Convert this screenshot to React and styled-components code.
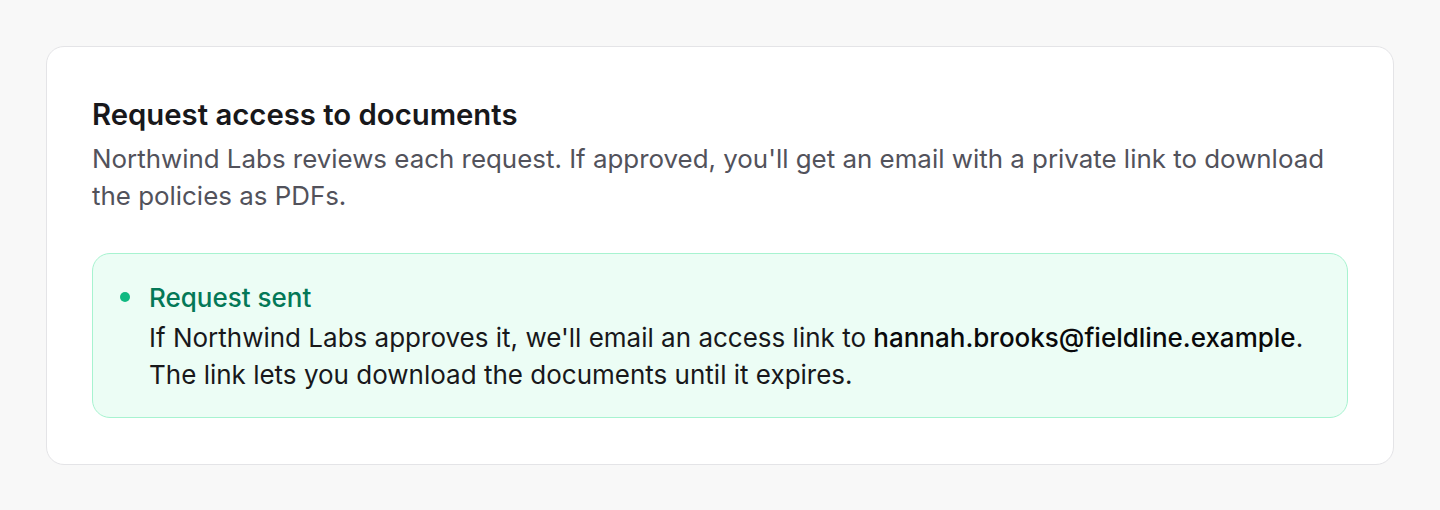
import React from "react";
import styled, { createGlobalStyle } from "styled-components";

const Global = createGlobalStyle`
  html, body { margin: 0; padding: 0; background: #f8f8f8; }
  body { font-family: Inter, "Noto Sans", sans-serif; -webkit-font-smoothing: antialiased; }
`;

const Page = styled.div`
  padding: 46px;
  box-sizing: border-box;
  min-height: 510px;
`;

const Card = styled.section`
  background: #ffffff;
  border: 1px solid #e4e4e7;
  border-radius: 18px;
  padding: 50px 45px 46px;
`;

const Title = styled.h2`
  margin: 0;
  font-size: 29.3px;
  line-height: 35px;
  font-weight: 600;
  color: #18181b;
`;

const Description = styled.p`
  margin: 8px 0 0;
  font-size: 25.9px;
  line-height: 37px;
  color: #52525b;
`;

const Alert = styled.div`
  margin-top: 39px;
  display: grid;
  grid-template-columns: 10px 1fr;
  column-gap: 19px;
  padding: 24.5px 26px 24.5px 27px;
  background: #ecfdf5;
  border: 1.5px solid #a7f3d0;
  border-radius: 18px;
`;

const Dot = styled.span`
  width: 10px;
  height: 10px;
  border-radius: 50%;
  background: #10b981;
  margin-top: 13.5px;
`;

const AlertBody = styled.div`
  display: flex;
  flex-direction: column;
  gap: 3px;
`;

const AlertTitle = styled.div`
  font-size: 26px;
  line-height: 37px;
  font-weight: 500;
  color: #047857;
`;

const AlertText = styled.p`
  margin: 0;
  font-size: 26px;
  line-height: 37px;
  color: #18181b;
`;

const Email = styled.strong`
  font-weight: 500;
  color: #09090b;
`;

export default function App() {
  return (
    <>
      <Global />
      <Page>
        <Card>
          <Title>Request access to documents</Title>
          <Description>
            Northwind Labs reviews each request. If approved, you'll get an email with a private link to download
            the policies as PDFs.
          </Description>
          <Alert role="status">
            <Dot />
            <AlertBody>
              <AlertTitle>Request sent</AlertTitle>
              <AlertText>
                If Northwind Labs approves it, we'll email an access link to{" "}
                <Email>hannah.brooks@fieldline.example</Email>.
                <br />
                The link lets you download the documents until it expires.
              </AlertText>
            </AlertBody>
          </Alert>
        </Card>
      </Page>
    </>
  );
}
